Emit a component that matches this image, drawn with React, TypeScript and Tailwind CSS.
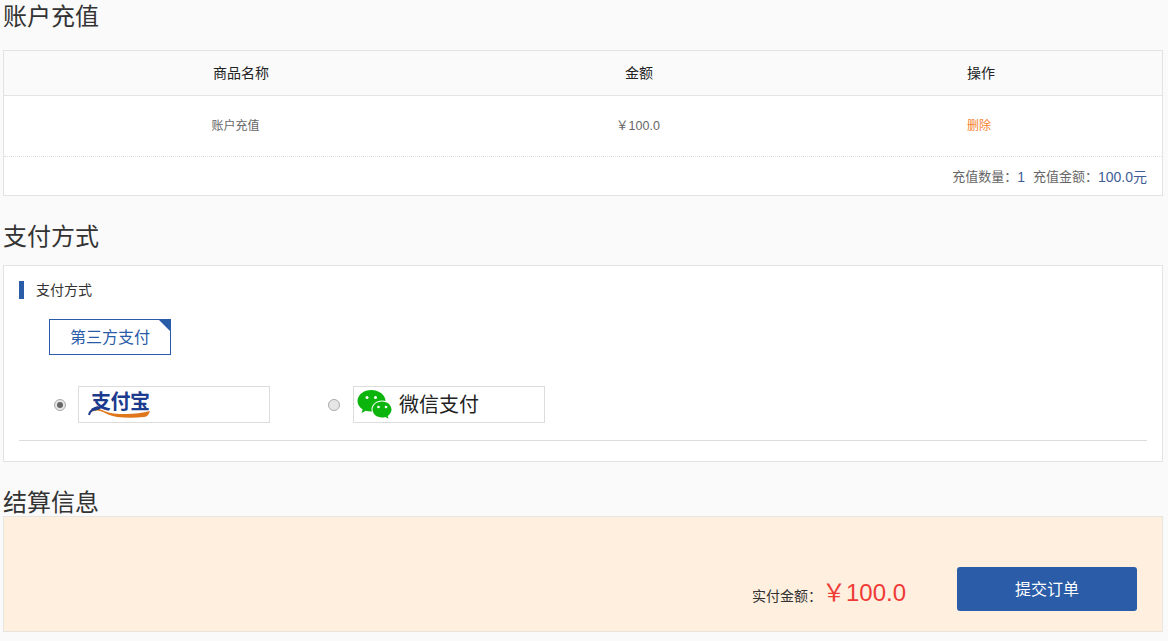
import React from 'react';

const font = { fontFamily: '"Liberation Sans", "Noto Sans CJK SC", sans-serif' };

function WechatIcon() {
  return (
    <svg width="36" height="32" viewBox="0 0 36 32" className="shrink-0">
      <path d="M14.500 1C6.800 1 .5 5.900.5 12c0 3.500 2 6.500 5.200 8.500L4.500 24l4.300-2.200c1.700.5 3.600.8 5.700.8 7.700 0 14-4.700 14-10.600S22.200 1 14.500 1z" fill="#0cb50c" />
      <path d="M25 11.500c-5.800 0-10.500 4-10.500 9s4.700 9 10.500 9c1.300 0 2.500-.2 3.600-.5l3.400 2-.9-3.300c2.700-1.700 4.400-4.200 4.400-7.200 0-5-4.700-9-10.500-9z" fill="#ffffff" />
      <path d="M25 12.500c-5.300 0-9.500 3.600-9.500 8s4.200 8 9.500 8c1.200 0 2.400-.2 3.500-.6l3 1.800-.8-2.800c2.300-1.500 3.800-3.800 3.800-6.400 0-4.400-4.200-8-9.500-8z" fill="#0cb50c" />
      <circle cx="10" cy="8.500" r="1.500" fill="#fff" />
      <circle cx="18.500" cy="8.500" r="1.500" fill="#fff" />
      <circle cx="21.500" cy="18" r="1.300" fill="#fff" />
      <circle cx="29" cy="18" r="1.300" fill="#fff" />
    </svg>
  );
}

function AlipayLogo() {
  return (
    <div className="relative ml-[8px] h-[28px] w-[66px]">
      <svg width="66" height="28" viewBox="0 0 66 28" className="absolute left-0 top-0">
        <path d="M4 21c3-4 7-4 11-2 8 4 15 4 24 4 8 0 17-1 24-3-1 3-3 6-6 6-9 1-18 1-27 0-6-1-10-3-14-5-4-2-8-2-12 0z" fill="#e0771c" />
        <path d="M2 24c1-4 5-7 9-8" stroke="#1c3a8e" strokeWidth="2" fill="none" />
      </svg>
      <span className="absolute left-[4px] top-[-1px] whitespace-nowrap text-[20px] font-bold leading-[24px] tracking-[-0.5px] text-[#1c3a8e]">支付宝</span>
    </div>
  );
}

export default function App() {
  return (
    <div className="h-[641px] overflow-hidden bg-[#fafafa] pl-[3px] pr-[5px] text-[#333]" style={font}>
      <h2 className="text-[24px] font-normal leading-[34px] text-[#333]">账户充值</h2>

      <div className="mt-[16px] h-[146px] border border-[#e3e3e3] bg-white">
        <div className="flex h-[45px] items-center border-b border-[#e3e3e3] bg-[#fafafa] text-[14px] text-[#222]">
          <div className="w-[474px] text-center">商品名称</div>
          <div className="w-[322px] text-center">金额</div>
          <div className="flex-1 text-center">操作</div>
        </div>
        <div className="flex h-[61px] items-center border-b border-dotted border-[#ddd] text-[12px] text-[#666]">
          <div className="w-[463px] text-center">账户充值</div>
          <div className="w-[329px] pl-[13px] text-center text-[12.5px]">￥100.0</div>
          <div className="flex-1 text-center text-[#f5812c]">删除</div>
        </div>
        <div className="flex h-[38px] items-center justify-end pr-[15px] pt-[2px] text-[13px] text-[#666]">
          <span>充值数量：</span>
          <span className="text-[14px] text-[#3f5d96]">1</span>
          <span className="ml-[8px]">充值金额：</span>
          <span className="text-[14px] text-[#3f5d96]">100.0元</span>
        </div>
      </div>

      <h2 className="mt-[24px] text-[24px] font-normal leading-[34px] text-[#333]">支付方式</h2>

      <div className="mt-[11px] h-[197px] border border-[#e3e3e3] bg-white px-[15px] pt-[15px]">
        <div className="h-[18px] border-l-[5px] border-[#2b5ca8] pl-[12px] text-[14px] leading-[18px] text-[#333]">支付方式</div>
        <div className="relative ml-[30px] mt-[20px] flex h-[36px] w-[122px] items-center justify-center border border-[#2b5ca8] pt-[1px] text-[16px] text-[#2b5ca8]">
          第三方支付
          <span className="absolute right-0 top-0 h-0 w-0 border-l-[11px] border-t-[11px] border-l-transparent border-t-[#2b5ca8]" />
        </div>
        <div className="mt-[31px] flex items-center">
          <span className="ml-[35px] flex h-[12px] w-[12px] items-center justify-center rounded-full border border-[#aaa] bg-[#e6e6e6]">
            <span className="h-[6px] w-[6px] rounded-full bg-[#666]" />
          </span>
          <div className="ml-[12px] flex h-[37px] w-[192px] items-center border border-[#dcdcdc] bg-white">
            <AlipayLogo />
          </div>
          <span className="ml-[58px] h-[12px] w-[12px] rounded-full border border-[#aaa] bg-[#e6e6e6]" />
          <div className="ml-[13px] flex h-[37px] w-[192px] items-center border border-[#dcdcdc] bg-white pl-[3px]">
            <WechatIcon />
            <span className="ml-[6px] pt-[1px] text-[20px] text-[#222]">微信支付</span>
          </div>
        </div>
        <div className="mt-[17px] border-t border-[#dcdcdc]" />
      </div>

      <h2 className="mt-[24px] h-[30px] text-[24px] font-normal leading-[34px] text-[#333]">结算信息</h2>

      <div className="flex h-[116px] items-start justify-end border border-[#e8e4de] bg-[#feefdf] pr-[25px]">
        <span className="mt-[70px] text-[14px] leading-[18px] text-[#333]">实付金额：</span>
        <span className="mt-[59px] text-[24px] leading-[34px] text-[#ef3b36]">￥100.0</span>
        <button className="ml-[51px] mt-[50px] flex h-[44px] w-[180px] items-center justify-center rounded-[3px] bg-[#2b5ca8] pt-[2px] text-[16px] text-white">提交订单</button>
      </div>
    </div>
  );
}
